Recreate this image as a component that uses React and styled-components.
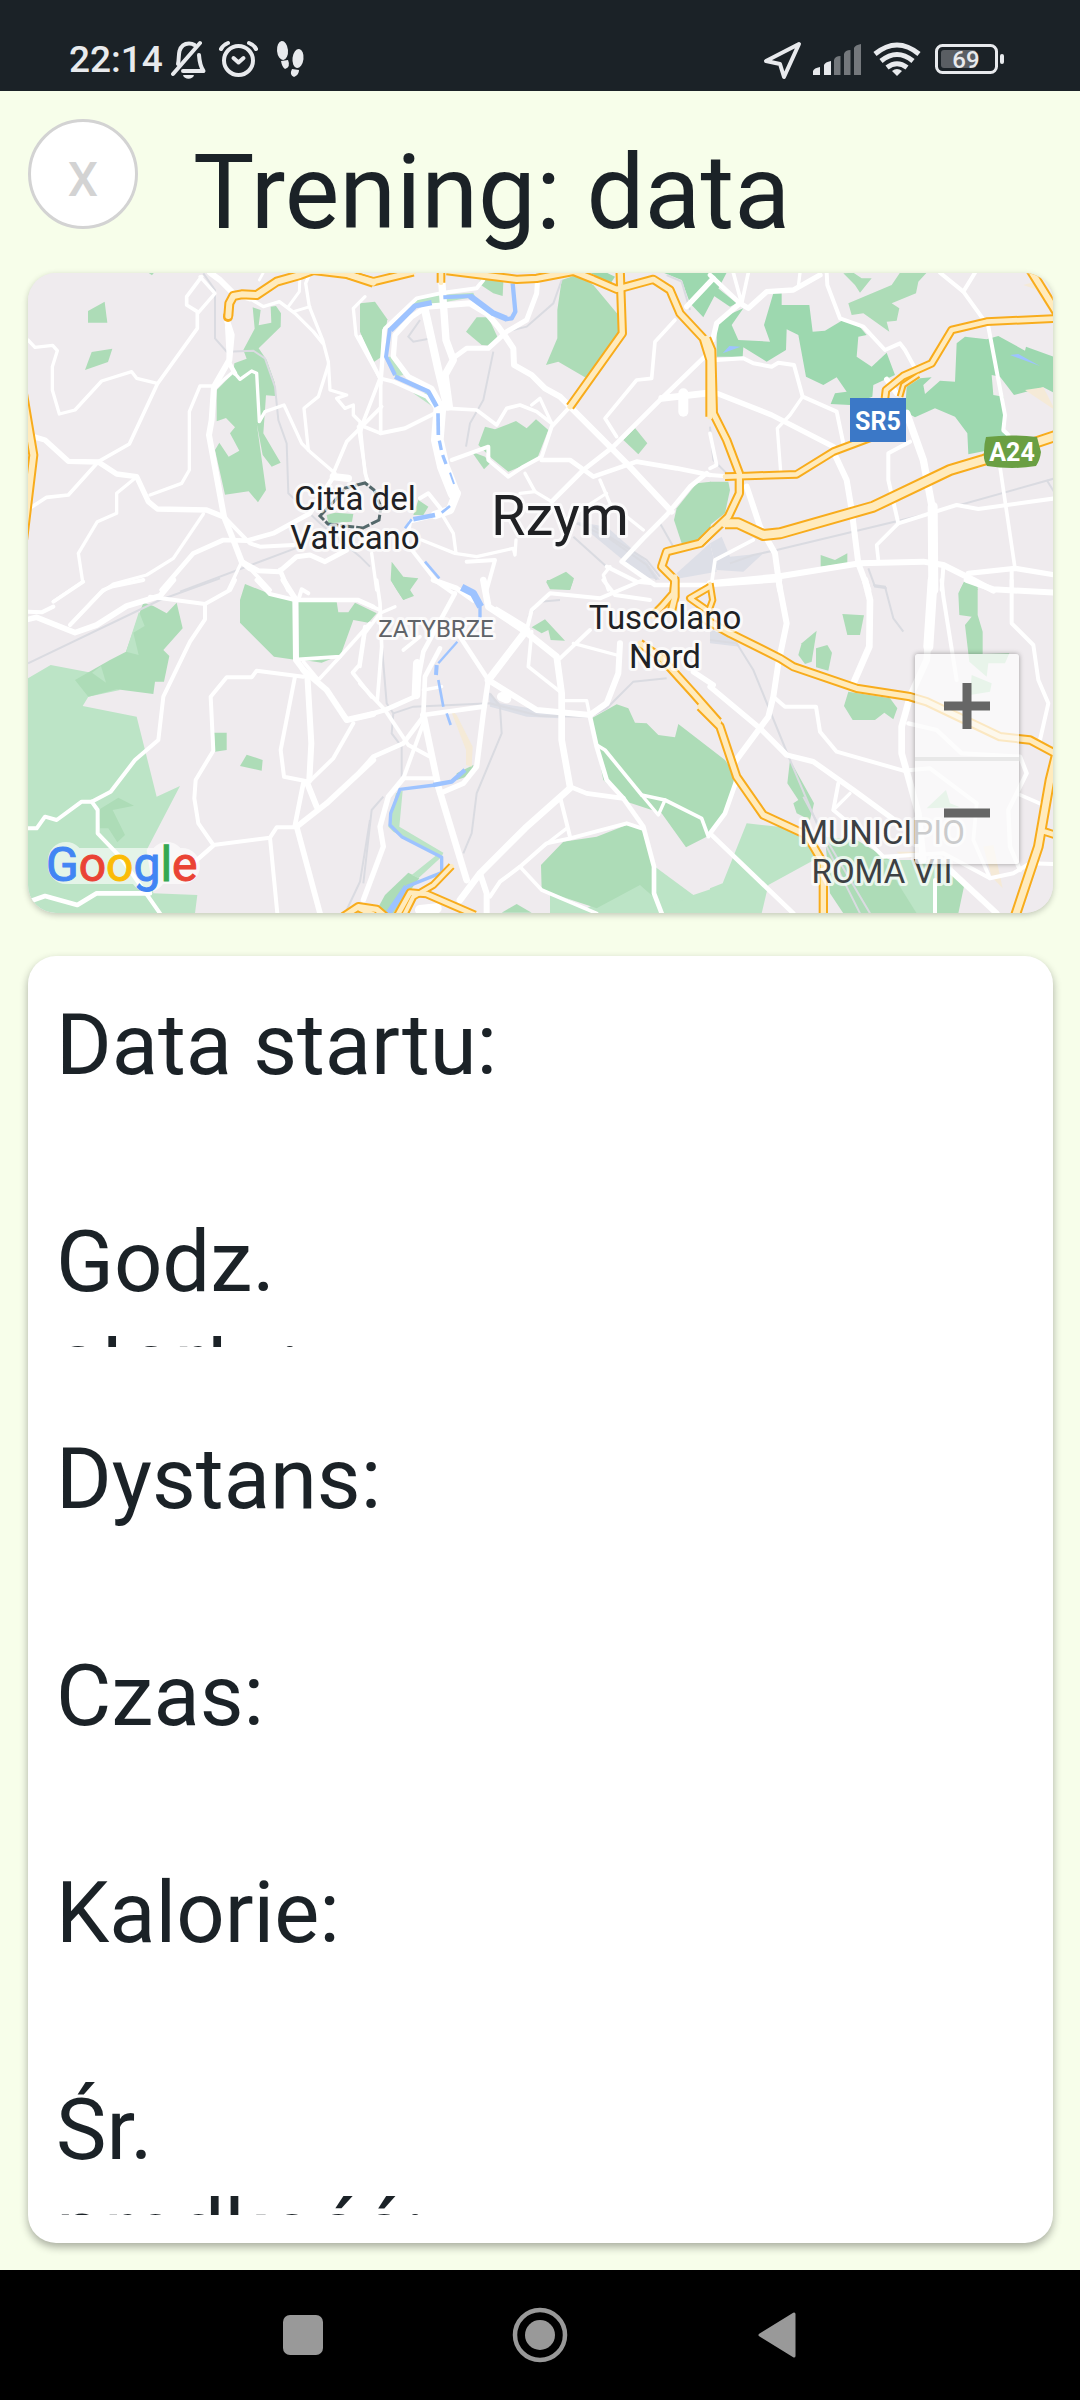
import React from "react";
import styled, { createGlobalStyle } from "styled-components";

const GlobalStyle = createGlobalStyle`
  *, *::before, *::after { box-sizing: border-box; }
  body {
    margin: 0;
    background: #f7feea;
    color: #1b2227;
    font-family: Roboto, "Liberation Sans", sans-serif;
  }
`;

const Screen = styled.div`
  display: flex;
  flex-direction: column;
  min-height: 100vh;
  background: #f7feea;
`;

/* ---------- system status bar ---------- */

const StatusBar = styled.div`
  display: flex;
  align-items: center;
  justify-content: space-between;
  height: 91px;
  padding: 29px 76px 0 69px;
  background: #1b2227;
  color: #e8eaed;
`;

const StatusGroup = styled.div`
  display: flex;
  align-items: center;
  gap: ${(p) => p.$gap}px;
`;

const Clock = styled.time`
  font-size: 37px;
  font-weight: 500;
  line-height: 40px;
`;

const StatusSvg = styled.svg`
  display: block;
  height: 40px;
  width: ${(p) => p.$width}px;
`;

function BellOffIcon() {
  return (
    <StatusSvg $width={38} viewBox="171 40 38 40" aria-hidden="true">
      <g fill="none" stroke="#e8eaed" strokeWidth="4" strokeLinecap="round" strokeLinejoin="round">
        <path d="M200 43 L173 74" />
        <path d="M178 64 C179 60 178.500 55 179.500 51 C181 46 185 43.500 189 43.500 C191 43.500 193 44 194.500 45" />
        <path d="M199 55 C199.500 62 200 66 203.500 71 L183 71" />
      </g>
      <path d="M183 75 H194 C193 80 184 80 183 75 Z" fill="#e8eaed" />
    </StatusSvg>
  );
}

function AlarmIcon() {
  return (
    <StatusSvg $width={44} viewBox="218 40 44 40" aria-hidden="true">
      <g fill="none" stroke="#e8eaed" strokeWidth="4" strokeLinecap="round" strokeLinejoin="round">
        <circle cx="239.500" cy="60.500" r="14.500" />
        <path d="M234.500 58 L239.500 62.500 L244.500 58" />
        <path d="M222 49 Q224 45 229 43 M257 49 Q255 45 250 43" />
      </g>
    </StatusSvg>
  );
}

function StepsIcon() {
  return (
    <StatusSvg $width={36} viewBox="270 40 36 40" aria-hidden="true">
      <g fill="#e8eaed">
        <ellipse cx="283.500" cy="50.500" rx="5.500" ry="9.500" transform="rotate(-5 283.500 50.500)" />
        <path d="M282 61 L289 60 Q292 67 286 69 Q283 67 282 61 Z" />
        <ellipse cx="299" cy="58.500" rx="5.500" ry="9.500" transform="rotate(7 299 58.500)" />
        <path d="M293 69 L300 70 Q300 75 295 77 Q290 75 293 69 Z" />
      </g>
    </StatusSvg>
  );
}

function LocationIcon() {
  return (
    <StatusSvg $width={40} viewBox="762 40 40 40" aria-hidden="true">
      <path d="M799 44 L766 61 L780 64 L784 77 Z" fill="none" stroke="#e8eaed" strokeWidth="4" strokeLinejoin="round" />
    </StatusSvg>
  );
}

function SignalIcon() {
  return (
    <StatusSvg $width={50} viewBox="812 40 50 40" aria-hidden="true">
      <path d="M813 75 V71 Q814 68 820 67 V75 Z M824 75 V65 Q825 62 831 61 V75 Z" fill="#e8eaed" />
      <path d="M834 75 V60 Q835 56 840.500 56 V75 Z M844 75 V54 Q845 50 850.500 50 V75 Z M854 75 V48 Q855 45 861 44 V75 Z" fill="#74787c" />
    </StatusSvg>
  );
}

function WifiIcon() {
  return (
    <StatusSvg $width={50} viewBox="872 40 50 40" aria-hidden="true">
      <g fill="none" stroke="#e8eaed" strokeWidth="5">
        <path d="M875 54 Q897 36 919 54" />
        <path d="M881 61 Q897 48 913 61" />
        <path d="M887 67.500 Q897 60 907 67.500" />
      </g>
      <path d="M892 71 Q897 67 902 71 L897 76 Z" fill="#e8eaed" />
    </StatusSvg>
  );
}

function BatteryIcon() {
  return (
    <StatusSvg $width={72} viewBox="932 40 72 40" role="img" aria-label="69%">
      <rect x="936.500" y="45.500" width="60" height="27" rx="6" fill="none" stroke="#e8eaed" strokeWidth="3" />
      <rect x="941" y="50" width="35" height="18" rx="3" fill="#5a5e63" />
      <rect x="1000" y="54" width="4" height="10" rx="2" fill="#e8eaed" />
      <text x="966" y="68" textAnchor="middle" fontSize="24" fontWeight="500" fill="#e8eaed">69</text>
    </StatusSvg>
  );
}

/* ---------- page header ---------- */

const Header = styled.header`
  display: flex;
  align-items: flex-start;
  gap: 55px;
  padding: 28px 28px 6px;
`;

const CloseButton = styled.button`
  flex: none;
  width: 110px;
  height: 110px;
  padding: 12px 0 0;
  border: 3px solid #d3d3d3;
  border-radius: 50%;
  background: #ffffff;
  color: #d3d3d3;
  font: 500 48px/56px Roboto, "Liberation Sans", sans-serif;
`;

const Title = styled.h1`
  margin: 0;
  font-size: 103px;
  font-weight: 400;
  line-height: 148px;
  white-space: nowrap;
`;

const Content = styled.main`
  display: flex;
  flex: 1;
  flex-direction: column;
  gap: 43px;
  padding: 0 27px 27px 28px;
`;

/* ---------- map ---------- */

const MapCard = styled.section`
  position: relative;
  overflow: hidden;
  border-radius: 28px;
  background: #efebee;
  box-shadow: 0 2px 6px rgba(0, 0, 0, 0.22);
`;

const MapSvg = styled.svg`
  display: block;
  width: 100%;
  height: auto;
`;

const ZoomPanel = styled.div`
  position: absolute;
  right: 34px;
  bottom: 49px;
  display: flex;
  flex-direction: column;
  width: 104px;
  border-radius: 3px;
  background: rgba(252, 252, 252, 0.74);
  box-shadow: 0 0 5px rgba(0, 0, 0, 0.35);
`;

const ZoomButton = styled.button`
  display: flex;
  align-items: center;
  justify-content: center;
  height: 103px;
  padding: 0;
  border: 0;
  background: transparent;

  & + & {
    box-sizing: content-box;
    border-top: 4px solid #e8e8e8;
  }
`;

const PARK = "#addcb7";
const WOOD = "#9dd8af";
const MEADOW = "#bce4c6";
const SAND = "#f5ead7";

/* Each tile keeps its features in its own grid, three units to a map unit. */
const TILES = [
  {
    x: 20, y: 260,
    areas: [
      [PARK, "204,153 254,125 262,188 204,188"],
      [PARK, "215,276 277,266 264,306 195,330"],
      [PARK, "385,38 402,38 396,46"],
      [PARK, "698,142 722,150 716,196 754,188 752,140 768,138 783,160 782,200 716,265 740,300 765,370 765,408 738,406 735,450 730,520 782,608 755,620 728,585 710,490 738,690 714,727 686,694 615,704 585,570 598,548 626,590 658,572 630,520 645,502 618,474 590,484 590,390 640,340 643,310 680,296 670,270 704,206"],
      [PARK, "920,765 945,758 1000,762 996,785 925,790"],
    ],
    rails: ["550,40 585,90 585,235 620,275 700,272 735,295 765,380 775,480 800,550 805,700 900,790 1020,890 1050,920", "480,995 840,860"],
    roads: [
      [10, "24,240 45,262 98,256 112,272 97,320 97,390 118,462 165,450 245,363 335,335 350,355 412,370"],
      [11, "545,50 500,110 500,135 532,155 532,205 412,372 328,552 235,605 145,705 80,712 24,748"],
      [10, "535,158 585,100 540,50"],
      [18, "570,38 600,60 640,100 690,115"],
      [16, "40,530 75,540 145,604 235,606 290,642 350,650 385,725 412,747 560,750 610,770"],
      [10, "345,655 290,700 290,760 232,785 175,880 188,965 100,1025"],
      [10, "390,705 485,670 508,630 508,455 540,378 585,378"],
      [18, "622,185 635,225 628,300 582,380 575,480 567,525 612,770 640,840 665,905 690,925"],
      [10, "585,385 610,360 640,335 660,358 695,333 710,340 718,485 735,455 792,435 845,550 870,575 945,640"],
      [14, "622,200 628,310 645,340"],
      [10, "680,110 730,140 778,125 825,160 880,215 908,250"],
      [10, "870,38 857,70 868,140 908,240 925,305 930,390 980,405 950,415 975,445 1000,435 1000,465 1030,495"],
      [10, "925,315 895,410 852,445 865,570"],
      [9, "840,38 838,95 805,140"],
      [9, "820,155 870,140"],
      [8, "718,60 730,38"],
      [10, "1035,110 1000,145 1008,225 1080,355"],
      [11, "1085,440 980,545 940,640"],
      [10, "1015,500 1040,660"],
      [10, "550,762 460,895 380,945 280,972 240,1000 150,1095"],
      [14, "425,990 520,880 610,840 680,842 760,820 870,760 940,650"],
      [12, "612,770 690,850 720,860 820,855"],
      [10, "665,905 625,990"],
      [15, "665,905 715,932 778,935 830,890 870,885 915,905 980,870"],
      [14, "780,930 805,990"],
      [12, "690,925 750,990"],
      [22, "940,650 985,655"],
    ],
    water: [],
    highways: [
      [30, "625,168 628,130 640,108 665,103 710,105 770,65 840,45 880,30 980,42 1060,68"],
      [30, "8,395 40,585 8,850"],
    ],
  },
  {
    x: 360, y: 260,
    areas: [
      [PARK, "0,130 45,125 82,178 65,290 38,308 0,215"],
      [PARK, "360,60 395,50 430,65 428,108 400,100 358,72"],
      [PARK, "350,172 385,172 412,230 395,258 365,255 318,215"],
      [PARK, "605,60 650,45 700,75 775,165 775,225 680,355 595,305 558,315 592,235 592,150"],
      [PARK, "375,500 405,508 468,483 500,505 528,478 565,510 530,600 445,635 395,595 355,555"],
      [PARK, "335,575 375,590 390,610 372,628"],
      [PARK, "790,540 825,504 862,550 835,583"],
      [PARK, "1052,665 1010,670 950,745 942,780 965,850 1000,850 1052,800"],
      [PARK, "175,720 205,740 190,765 160,765"],
      [PARK, "95,905 130,950 175,955 150,990 155,1005 130,1020 92,960"],
      [PARK, "558,965 618,935 642,955 630,990 570,988"],
      [WOOD, "910,38 1100,38 1030,172 990,130 965,60"],
      [WOOD, "690,38 740,38 765,50 752,70"],
      [MEADOW, "165,115 240,105 340,98 345,110 150,145"],
      [MEADOW, "78,290 98,290 130,345 105,350"],
      [MEADOW, "160,400 205,400 225,445"],
    ],
    rails: ["180,180 145,230 160,245 215,235", "605,60 580,130 500,200 440,215", "400,275 370,420 330,490 318,560", "920,45 965,65 990,150", "650,790 740,830 860,915 890,960", "700,800 860,900 900,950", "640,830 740,920", "900,790 940,860"],
    yards: ["650,785 740,800 860,905 900,960 850,950", "950,940 1050,850 1070,935 960,955"],
    roads: [
      [11, "0,230 60,355 10,485 0,520"],
      [11, "72,210 62,355 62,520 0,495"],
      [12, "370,60 350,85 240,100 170,115 75,205 62,370"],
      [12, "60,355 100,365 200,410 225,440"],
      [18, "200,140 330,130 380,160 415,200 440,235 460,265 462,315 515,345 555,385 600,410 630,440"],
      [16, "200,140 155,170 105,225 100,290 145,350 215,385 235,420"],
      [24, "195,150 235,330 262,440"],
      [22, "245,60 258,240 280,300 255,345 268,440"],
      [15, "285,290 320,265 385,265 440,215 500,180 530,100 532,70"],
      [11, "265,445 350,450 410,495 440,445 480,435 530,455 575,490"],
      [10, "515,435 540,415 575,490"],
      [12, "62,520 135,505 225,460"],
      [10, "0,490 15,640 25,665"],
      [12, "630,440 575,500 545,590 490,620 445,650 385,600 385,560 275,600"],
      [38, "240,440 232,540 250,620 282,700"],
      [26, "290,700 270,750 225,765"],
      [12, "245,750 205,700 180,715"],
      [12, "230,765 150,785 140,850 230,965 280,1000"],
      [14, "545,600 630,600 700,650 830,605 950,625 1050,645"],
      [18, "630,440 800,610 935,755"],
      [14, "1060,265 905,415 760,560 670,630 575,725"],
      [16, "980,140 1060,55"],
      [11, "945,180 885,245 875,355 830,360 735,475 770,530"],
      [20, "905,415 1035,400"],
      [30, "970,400 970,455"],
      [14, "1040,640 990,680 920,765 850,835 785,905 885,975 1050,975"],
      [10, "720,660 750,730 850,810"],
      [9, "740,700 600,790"],
      [10, "495,640 525,695 575,725"],
      [10, "480,700 525,695"],
      [10, "185,840 285,880 350,890 460,865 465,885 468,840"],
      [10, "250,770 280,820 288,880"],
      [12, "320,905 405,900 380,990"],
      [10, "35,880 50,990"],
      [10, "750,920 730,945 745,990"],
      [12, "740,920 830,965 880,970"],
    ],
    water: [
      [13, "458,70 466,155 455,175 435,178"],
      [18, "440,176 400,160 330,108"],
      [12, "335,108 250,112"],
      [16, "215,128 165,138 92,210"],
      [12, "90,205 78,290 105,345"],
      [14, "105,350 205,395 230,440"],
      [11, "234,460 235,525"],
      [10, "238,542 244,570"],
      [10, "248,585 258,612"],
      [6, "270,638 282,672"],
      [8, "270,738 245,758"],
      [14, "225,765 160,778"],
      [8, "155,778 135,805"],
      [8, "195,905 238,955"],
    ],
    highways: [
      [28, "-40,42 40,65 160,36"],
      [26, "243,20 243,68"],
      [28, "260,32 470,58 530,55 640,34 700,58 770,88 880,58 930,90 960,160 1030,235 1050,300 1050,470"],
      [28, "780,20 787,220 630,440"],
      [28, "1060,810 1020,850 920,875 905,920 945,960 945,1010 935,1050"],
    ],
  },
  {
    x: 710, y: 260,
    areas: [
      [WOOD, "20,180 100,145 65,195 85,240 180,245 162,195 190,100 215,100 215,135 298,135 308,215 345,212 395,182 440,190 470,225 445,230 440,290 485,320 530,278 555,345 490,375 487,410 420,435 362,432 375,400 410,395 380,352 340,375 288,350 265,225 230,208 228,270 170,305 100,262 98,290 20,290"],
      [WOOD, "0,65 80,130 60,140 0,100"],
      [WOOD, "590,380 630,355 665,352 640,375 645,402 690,362 735,365 740,250 765,230 830,238 865,228 945,272 948,260 1035,292 1035,400 1000,382 912,405 870,350 845,345 850,405 880,410 885,470 875,515 895,530 840,570 775,583 772,520 735,470 675,445 615,472 585,455"],
      [PARK, "400,40 430,38 455,55 485,55 450,98 435,75"],
      [PARK, "415,130 545,75 570,38 650,38 625,65 618,100 545,130 568,145 560,182 530,185 538,215 460,160 425,165"],
      [PARK, "0,665 55,665 60,690 45,760 0,795"],
      [PARK, "332,885 375,900 412,880 412,910 332,920"],
      [PARK, "750,990 765,960 805,990"],
      [SAND, "945,390 1000,382 1035,450"],
      [SAND, "940,75 975,65 1010,100"],
    ],
    rails: ["60,910 130,885 200,870 660,760 1035,655", "1010,660 1035,700", "475,925 495,980 530,985", "0,500 10,600 60,650"],
    yards: ["0,850 35,830 60,890 160,880 100,935 20,930"],
    roads: [
      [14, "0,45 90,130"],
      [11, "70,38 95,130 115,38"],
      [16, "8,240 20,190 90,130 115,145 170,95 250,90 330,45"],
      [10, "265,80 270,38"],
      [12, "350,38 352,75 390,175 460,200 525,270 570,250 585,270 618,330"],
      [12, "690,38 760,95 825,185 835,200 885,465 880,510 895,525"],
      [12, "760,95 795,38"],
      [12, "20,300 100,295 130,310 185,320 205,308 252,315 278,410 380,455 400,550"],
      [10, "278,410 240,465 202,505 212,635"],
      [16, "20,400 185,465 370,560"],
      [18, "375,585 410,660 425,750 445,910 475,990"],
      [22, "590,460 640,600 668,750"],
      [30, "668,740 670,990"],
      [12, "600,545 535,580 535,660 565,790"],
      [11, "565,790 500,855 505,900"],
      [12, "565,790 740,735 805,747 1035,715"],
      [11, "870,620 915,925"],
      [18, "0,970 200,950 450,910 640,905 700,915 790,960 850,992"],
      [16, "775,940 915,925 1035,945"],
      [12, "905,930 905,990"],
      [12, "700,920 695,990"],
      [18, "110,680 150,800 195,880 210,990"],
      [11, "5,970 15,900 130,840"],
      [11, "0,520 20,615 0,625"],
      [12, "0,645 70,650"],
      [16, "530,358 560,400"],
    ],
    water: [],
    lakes: ["38,280 58,258 92,260", "900,285 925,282 990,318"],
    highways: [
      [26, "45,650 110,648 260,643 370,575 490,530"],
      [26, "525,415 528,390 580,348 665,310 725,210 830,185 1045,175"],
      [20, "570,410 580,375 625,345"],
      [30, "955,20 1045,165"],
      [28, "-10,235 5,270 10,460 50,540 88,640 88,700 55,770 -30,850"],
      [36, "45,790 85,790 160,825 210,820 490,740 720,630 820,600 1045,525"],
    ],
  },
  {
    x: 20, y: 580,
    areas: [
      [MEADOW, "24,295 92,255 250,285 300,330 205,350 188,378 350,410 410,650 480,618 380,810 400,940 532,945 525,1000 24,1000"],
      [PARK, "165,300 270,240 318,215 360,95 370,68 400,78 440,100 470,68 488,145 430,210 448,228 432,305 405,305 400,342 290,328 205,350"],
      [MEADOW, "357,95 374,138 340,158 356,225 318,215"],
      [MEADOW, "216,278 243,258 258,308"],
      [PARK, "675,12 745,40 830,60 830,240 762,230 660,128 660,60"],
      [PARK, "835,62 950,65 955,97 985,97 1005,68 1070,100 1045,128 1000,120 962,225 905,248 835,238"],
      [PARK, "582,458 620,458 620,510 585,515"],
      [PARK, "680,524 728,540 725,572 660,558"],
      [PARK, "235,690 295,653 342,677 278,690 315,765 292,787 265,745 240,745"],
    ],
    rails: ["24,250 420,60 600,-5", "1050,720 1020,905 980,990"],
    roads: [
      [12, "24,95 65,97 100,80"],
      [11, "100,65 190,5"],
      [12, "150,135 250,30 275,20 370,0"],
      [17, "24,118 50,112 165,158 230,135 320,78 420,48 460,0"],
      [12, "390,50 555,72 630,30 645,0"],
      [12, "555,72 555,118 510,185 430,350 415,480 345,540 272,635 215,665 185,665 110,720 75,710 50,745 24,745"],
      [12, "215,665 233,690 233,760 300,830 350,900 420,1000"],
      [14, "24,966 75,948 172,975 230,940 390,940"],
      [13, "710,0 750,42 825,60 1015,60 1060,80"],
      [17, "790,0 828,60"],
      [18, "826,60 828,240 862,285 874,490 868,600"],
      [12, "835,60 845,28 865,40"],
      [12, "850,290 710,272 695,292 620,292 572,350 580,512 527,600 523,655 535,730 580,795 750,773 770,742 830,742"],
      [12, "825,290 782,510 792,590 868,605"],
      [13, "580,797 525,845"],
      [12, "750,773 772,1000"],
      [17, "830,740 900,1000"],
      [14, "824,740 850,610"],
      [12, "868,605 940,535 1000,430"],
      [17, "830,740 920,670 1060,540"],
      [18, "862,610 890,680"],
      [18, "850,270 920,330 980,420 1060,402"],
      [11, "835,238 960,230 1050,130"],
      [11, "960,230 895,300 850,245"],
      [12, "1035,140 1018,255 998,278 1055,350"],
    ],
    water: [],
    highways: [[28, "970,1010 1015,980 1070,988 1120,1030"]],
  },
  {
    x: 360, y: 580,
    areas: [
      [PARK, "92,0 110,30 130,60 162,48 150,30 165,0"],
      [PARK, "560,0 640,0 630,30 570,22"],
      [PARK, "515,142 555,118 615,182 572,180 565,150 545,160"],
      [PARK, "695,415 770,373 805,385 825,428 860,430 895,465 945,472 955,432 1095,540 1122,580 1120,640 1095,700 1040,770 978,802 905,700 800,665 730,600 712,510"],
      [MEADOW, "570,930 680,985 840,905 1000,945 1060,925 1060,1000 570,1000"],
      [MEADOW, "885,860 1000,945 885,1000"],
      [PARK, "610,785 710,770 800,735 845,745 880,860 880,950 840,915 710,985 545,930 543,855"],
      [PARK, "425,998 470,972 515,998"],
      [PARK, "145,878 178,895 100,1000 45,1000 75,945"],
      [PARK, "290,580 340,555 335,585 290,600"],
      [MEADOW, "108,640 128,632 118,740 250,818 245,830 175,895 155,885 230,825 100,755 85,740"],
      [SAND, "272,390 290,405 338,500 335,560 318,555 318,510"],
    ],
    rails: ["65,190 80,370 100,400 160,380 390,370 540,408 690,410 740,385 820,305 920,295", "100,400 95,460 125,500 125,590", "390,340 420,380 425,460 350,640 335,760 310,820", "70,650 35,690 10,910", "505,110 540,65 600,60"],
    yards: ["385,335 420,370 530,388 600,400 600,415 500,410 390,380"],
    roads: [
      [11, "50,0 60,70 65,200 52,360"],
      [11, "0,65 60,90"],
      [10, "105,80 60,100 15,160 0,260"],
      [11, "130,210 180,170"],
      [14, "285,40 190,215 165,350 75,390 0,412"],
      [12, "0,310 75,390 145,495 210,530"],
      [14, "300,170 385,300"],
      [16, "220,0 290,25 340,60"],
      [20, "370,0 385,80 490,150 590,230 605,340 605,480 630,620"],
      [10, "410,85 500,140"],
      [22, "385,300 500,150"],
      [12, "500,150 515,90 570,40 720,55 850,0"],
      [16, "385,300 370,400 350,560 310,610 240,640"],
      [14, "190,405 370,380"],
      [18, "385,300 530,390 690,405 740,370 775,280 780,190"],
      [12, "690,150 600,235"],
      [10, "640,190 770,225"],
      [11, "515,155 505,260 600,335"],
      [10, "610,362 680,362 690,410"],
      [14, "690,410 710,500 740,600 790,655 850,740 882,860 882,940 905,1000"],
      [11, "710,495 735,510 845,645 915,660 1025,715 1045,770"],
      [10, "845,645 895,705 915,660"],
      [14, "240,205 195,290 190,405"],
      [20, "190,405 235,620 320,900"],
      [10, "190,330 245,320"],
      [12, "190,430 130,595 220,595"],
      [16, "130,595 85,650 60,740 70,800 10,960"],
      [14, "0,575 40,530 130,490 190,410"],
      [26, "172,250 168,345"],
      [20, "300,960 360,880 495,745 630,625"],
      [14, "630,620 680,640 790,655"],
      [18, "360,880 380,940 380,1000"],
      [12, "600,650 630,770"],
      [12, "390,950 420,905 480,860 560,790 630,775 800,730 845,745"],
      [10, "555,795 620,745"],
      [11, "480,860 545,930 710,1000"],
      [12, "730,0 765,45 870,60"],
      [16, "1000,275 1060,315"],
      [28, "425,350 440,356"],
      [30, "180,990 230,985"],
    ],
    water: [
      [22, "305,22 340,40 362,80"],
      [10, "360,75 360,120"],
      [7, "292,185 235,250"],
      [12, "230,255 228,285"],
      [8, "235,300 250,380"],
      [8, "260,400 272,435"],
      [13, "315,570 275,605 220,615"],
      [10, "225,615 120,628 92,700 90,735 125,770 245,832 245,878 140,920"],
      [18, "140,920 85,1000"],
    ],
    highways: [
      [26, "945,-10 940,40 905,80 875,110"],
      [28, "840,190 905,235 1000,340 1075,425"],
      [24, "1050,20 990,55 1040,90"],
      [24, "275,858 220,915 160,950 130,1010"],
      [26, "110,1010 150,938 200,942 345,1005"],
      [28, "0,985 40,1005"],
    ],
  },
  {
    x: 710, y: 580,
    areas: [
      [PARK, "397,102 462,106 450,165 412,165"],
      [PARK, "320,152 305,245 285,252 265,225 275,190"],
      [PARK, "318,205 352,195 366,218 355,272 318,262"],
      [PARK, "415,335 540,355 562,385 550,418 523,398 495,420 428,420 402,378"],
      [PARK, "745,40 765,0 803,20 803,105 818,155 818,222 898,220 885,250 835,250 830,290 778,245 765,135 785,110 748,105"],
      [PARK, "785,285 845,310 840,335 780,345"],
      [PARK, "650,685 708,630 720,670 750,682"],
      [MEADOW, "110,730 300,750 330,830 175,915 155,1000 0,1000 0,925 38,910"],
      [PARK, "345,770 440,780 540,840 700,840 765,905 745,1000 400,1000 360,940"],
      [MEADOW, "520,840 620,1000 680,1000 680,840"],
      [PARK, "240,540 312,670 300,720 260,700 250,670 265,660 232,610"],
      [SAND, "820,800 850,795 878,925 845,890"],
      [SAND, "560,815 620,815 620,835 575,830"],
    ],
    rails: ["490,15 525,20 550,115 580,155", "0,180 80,190 130,270 240,540 350,800 450,1000", "280,650 350,780 480,1000"],
    yards: ["0,150 60,160 90,200 0,190"],
    roads: [
      [14, "0,15 210,0"],
      [18, "205,0 230,130 205,250 190,350 175,410 75,545"],
      [20, "465,0 480,60 478,200 430,310"],
      [30, "668,0 655,200"],
      [20, "655,180 650,240 600,350 575,440 575,520 625,700 640,840"],
      [12, "695,0 700,50 740,300"],
      [18, "770,0 850,28 1035,38"],
      [12, "905,0 905,130 970,195 985,300 1015,370 990,480"],
      [16, "0,320 150,445 230,525 310,545 430,630 560,725"],
      [14, "80,600 45,700 0,760 250,1000"],
      [12, "190,350 225,380 318,380 330,455 380,515 580,572 660,565 800,670"],
      [12, "385,610 370,690 430,740 520,830 700,820 840,895 910,880 960,850 1035,852"],
      [10, "420,640 370,690"],
      [13, "595,430 680,450 755,520 930,530 950,580 895,690 900,800 930,870"],
      [11, "920,640 1000,675"],
      [11, "800,670 790,780 840,895"],
      [12, "675,900 675,1000"],
      [18, "720,870 860,1000"],
    ],
    water: [],
    highways: [
      [22, "0,10 8,60 -10,110"],
      [28, "-20,115 60,160 210,235 250,260 440,325 600,350 650,365 870,470 960,480 1045,525"],
      [28, "-30,380 30,440 80,590 160,705 290,765 340,850 340,1010"],
      [32, "1045,500 1020,600 985,800 915,1010"],
      [26, "1005,755 1045,768"],
    ],
  },
];

function Layer({ children }) {
  return TILES.map((tile) => (
    <g key={`${tile.x}-${tile.y}`} transform={`translate(${tile.x} ${tile.y}) scale(0.33333)`}>
      {children(tile)}
    </g>
  ));
}

function lines(list, props, widthOf) {
  return list.map(([w, points]) => (
    <polyline key={points} points={points} fill="none" strokeWidth={widthOf ? widthOf(w) : w} {...props} />
  ));
}

const PlaceName = styled.text`
  fill: ${(p) => p.$color || "#202124"};
  font-size: ${(p) => p.$size}px;
  text-anchor: middle;
  stroke: rgba(255, 255, 255, 0.75);
  stroke-width: 6px;
  stroke-linejoin: round;
  paint-order: stroke;
`;

const RoadShield = styled.text`
  fill: #ffffff;
  font-size: 25px;
  font-weight: 700;
  text-anchor: middle;
`;

const MapLogo = styled.text`
  font-size: 48px;
  font-weight: 400;
  stroke-width: 1px;
`;

const MapLogoHalo = styled.path`
  fill: none;
  stroke: rgba(255, 255, 255, 0.6);
  stroke-width: 36px;
  stroke-linecap: round;
`;

function CityMap() {
  const joined = { strokeLinejoin: "round" };
  return (
    <MapSvg viewBox="28 273 1025 640" role="img" aria-label="Rzym">
      <rect x="28" y="273" width="1025" height="640" fill="#efebee" />
      <Layer>{(t) => t.areas.map(([fill, points]) => <polygon key={points} points={points} fill={fill} />)}</Layer>
      <Layer>{(t) => (t.yards || []).map((points) => <polygon key={points} points={points} fill="#dddfe7" />)}</Layer>
      <Layer>{(t) => t.rails.map((points) => <polyline key={points} points={points} fill="none" stroke="#dadbe1" strokeWidth="6" />)}</Layer>
      <Layer>{(t) => lines(t.roads, { stroke: "#ffffff", strokeLinecap: "round", ...joined })}</Layer>
      <Layer>{(t) => lines(t.water, { stroke: "#9dc3ff", ...joined })}</Layer>
      <Layer>{(t) => (t.lakes || []).map((points) => <polygon key={points} points={points} fill="#9dc3ff" />)}</Layer>
      <Layer>{(t) => lines(t.highways, { stroke: "#f8ac1c", ...joined })}</Layer>
      <path d="M228 316 V317" stroke="#f8ac1c" strokeWidth="10" strokeLinecap="round" />
      <Layer>{(t) => lines(t.highways, { stroke: "#ffebbd", strokeLinecap: "round", ...joined }, (w) => w - 12)}</Layer>

      <polygon
        points="320,516 342,493 345,488 365,483 374,490 381,507 379,520 363,528 328,524"
        fill="none"
        stroke="#54686b"
        strokeWidth="3"
        strokeDasharray="14 2"
      />

      <rect x="850" y="398" width="56" height="44" fill="#3b78c7" />
      <RoadShield x="878" y="430">SR5</RoadShield>
      <path d="M986 437 Q1012 434 1037 437 Q1039 445 1041 452 Q1040 460 1036 466 Q1012 470 987 466 Q983 460 984 452 Q984 444 986 437 Z" fill="#6a9f43" />
      <RoadShield x="1012" y="461">A24</RoadShield>

      <PlaceName $size={33} x="355" y="510">Città del</PlaceName>
      <PlaceName $size={33} x="355" y="549">Vaticano</PlaceName>
      <PlaceName $size={56} x="560" y="535">Rzym</PlaceName>
      <PlaceName $size={24} $color="#5f6368" x="436" y="637">ZATYBRZE</PlaceName>
      <PlaceName $size={33} x="665" y="629">Tuscolano</PlaceName>
      <PlaceName $size={33} x="665" y="668">Nord</PlaceName>
      <PlaceName $size={33} $color="#3c4043" x="882" y="844">MUNICIPIO</PlaceName>
      <PlaceName $size={33} $color="#3c4043" x="882" y="883">ROMA VII</PlaceName>

      <MapLogoHalo d="M66 860 V864 M66 866 H182 M148 868 V874 M167 860 V866" />
      <MapLogo x="46" y="881">
        <tspan fill="#4285f4" stroke="#4285f4">G</tspan>
        <tspan fill="#ea4335" stroke="#ea4335">o</tspan>
        <tspan fill="#fbbc05" stroke="#fbbc05">o</tspan>
        <tspan fill="#4285f4" stroke="#4285f4">g</tspan>
        <tspan fill="#34a853" stroke="#34a853">l</tspan>
        <tspan fill="#ea4335" stroke="#ea4335">e</tspan>
      </MapLogo>
    </MapSvg>
  );
}

/* ---------- training details ---------- */

const Details = styled.dl`
  display: flex;
  flex-direction: column;
  gap: 70px;
  margin: 0;
  padding: 27px 27px 28px 28px;
  border-radius: 28px;
  background: #ffffff;
  box-shadow: 0 4px 9px rgba(0, 0, 0, 0.32);
`;

const DetailRow = styled.div`
  display: grid;
  grid-template-columns: 48% 1fr;
  height: 147px;
  padding-top: 12px;
  overflow: hidden;
  font-size: 85px;
  line-height: 101px;
`;

const DetailValue = styled.dd`
  margin: 0;
`;

const LABELS = ["Data startu:", "Godz. startu:", "Dystans:", "Czas:", "Kalorie:", "Śr. prędkość:"];

/* ---------- system navigation ---------- */

const NavBar = styled.nav`
  display: flex;
  justify-content: center;
  background: #000000;
`;

const NavButton = styled.button`
  display: flex;
  align-items: center;
  justify-content: center;
  width: 237px;
  height: 130px;
  padding: 0;
  border: 0;
  background: transparent;
  color: #999999;
`;

export default function App() {
  return (
    <>
      <GlobalStyle />
      <Screen>
        <StatusBar>
          <StatusGroup $gap={8}>
            <Clock>22:14</Clock>
            <BellOffIcon />
            <AlarmIcon />
            <StepsIcon />
          </StatusGroup>
          <StatusGroup $gap={10}>
            <LocationIcon />
            <SignalIcon />
            <WifiIcon />
            <BatteryIcon />
          </StatusGroup>
        </StatusBar>

        <Header>
          <CloseButton type="button">X</CloseButton>
          <Title>Trening: data</Title>
        </Header>

        <Content>
          <MapCard>
            <CityMap />
            <ZoomPanel>
              <ZoomButton type="button" aria-label="+">
                <svg width="46" height="46" viewBox="0 0 46 46" aria-hidden="true">
                  <path d="M0 23 H46 M23 0 V46" stroke="#666666" strokeWidth="9" />
                </svg>
              </ZoomButton>
              <ZoomButton type="button" aria-label="−">
                <svg width="46" height="46" viewBox="0 0 46 46" aria-hidden="true">
                  <path d="M0 23 H46" stroke="#666666" strokeWidth="9" />
                </svg>
              </ZoomButton>
            </ZoomPanel>
          </MapCard>

          <Details>
            {LABELS.map((label) => (
              <DetailRow key={label}>
                <dt>{label}</dt>
                <DetailValue />
              </DetailRow>
            ))}
          </Details>
        </Content>

        <NavBar>
          <NavButton type="button" aria-label="Ostatnie">
            <svg width="40" height="40" viewBox="0 0 40 40" aria-hidden="true">
              <rect width="40" height="40" rx="7" fill="currentColor" />
            </svg>
          </NavButton>
          <NavButton type="button" aria-label="Ekran główny">
            <svg width="56" height="56" viewBox="0 0 56 56" aria-hidden="true">
              <circle cx="28" cy="28" r="25" fill="none" stroke="currentColor" strokeWidth="4.500" />
              <circle cx="28" cy="28" r="15" fill="currentColor" />
            </svg>
          </NavButton>
          <NavButton type="button" aria-label="Wstecz">
            <svg width="38" height="46" viewBox="0 0 38 46" aria-hidden="true">
              <path d="M2 23 L36 2 V44 Z" fill="currentColor" stroke="currentColor" strokeWidth="3" strokeLinejoin="round" />
            </svg>
          </NavButton>
        </NavBar>
      </Screen>
    </>
  );
}
